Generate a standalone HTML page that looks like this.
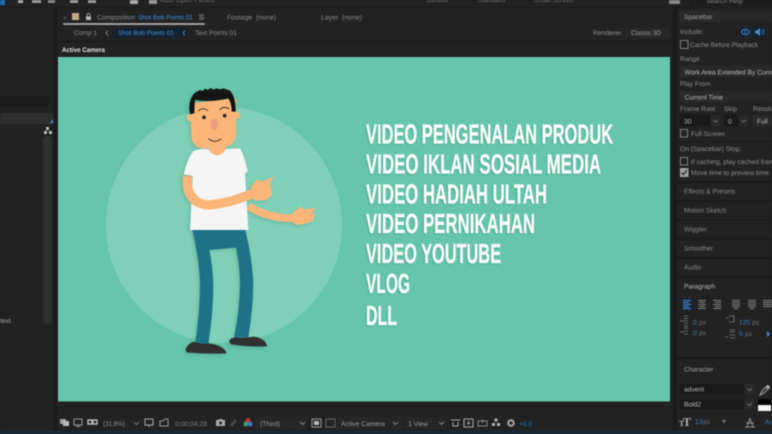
<!DOCTYPE html>
<html><head><meta charset="utf-8"><style>
html,body{margin:0;padding:0;width:772px;height:434px;overflow:hidden;background:#1b1b1b}
svg{display:block;filter:blur(.45px)}
text{font-family:"Liberation Sans",sans-serif;font-size:6.700px;fill:#8e8e8e;text-rendering:geometricPrecision}
.b{fill:#3f8fe0}.w{fill:#c4c4c4}
.h{font-family:"Liberation Sans Narrow","Liberation Sans",sans-serif;font-weight:700;font-size:27.5px;fill:#fbfefd;stroke:#fbfefd;stroke-width:.35px}
</style></head><body>
<svg width="772" height="434" viewBox="0 0 772 434" xmlns="http://www.w3.org/2000/svg">
<rect width="772" height="434" fill="#1b1b1b"/>
<!-- top bar -->
<rect width="772" height="7" fill="#222"/>
<rect x="0" y="0" width="5" height="5" fill="#1f6fc0"/>
<rect x="18" y="0" width="5" height="3" fill="#aaa"/><rect x="32" y="0" width="9" height="3" fill="#999"/><rect x="48" y="0" width="7" height="3" fill="#888"/><rect x="70" y="0" width="8" height="3" fill="#999"/><rect x="88" y="0" width="8" height="3" fill="#999"/>
<rect x="130" y="0" width="8" height="4" fill="#aaa"/><rect x="149" y="0" width="8" height="4" fill="#999"/>
<text x="160" y="2" style="fill:#777">Auto-Open Panels</text><text x="427" y="2" style="fill:#777">Default</text><text x="478" y="2" style="fill:#777">Standard</text><text x="534" y="2" style="fill:#777">Small Screen</text>
<rect x="669" y="0" width="11" height="4" fill="#888"/>
<rect x="690" y="0" width="82" height="6" fill="#1c1c1c"/><text x="706" y="3" style="fill:#888">Search Help</text>
<!-- panels -->
<rect x="0" y="8" width="54" height="423" fill="#222"/>
<rect x="57" y="8" width="616" height="423" fill="#222"/>
<rect x="677" y="8" width="95" height="423" fill="#222"/>
<rect x="0" y="431" width="772" height="3" fill="#1a2b3a"/>
<!-- left panel -->
<rect x="0" y="96" width="49" height="11" fill="#1b1b1b"/>
<rect x="0" y="113" width="53" height="11" fill="#2e2e2e"/>
<path d="M53 119v4h-3z" fill="#3f8fe0"/>
<g fill="#bbb"><rect x="46" y="127" width="3" height="3"/><rect x="44" y="131" width="3" height="3"/><rect x="49" y="131" width="3" height="3"/></g>
<rect x="43" y="136" width="9" height="188" rx="4" fill="#2f2f2f"/>
<text x="0" y="323" style="fill:#aaa">text</text>
<!-- comp tab row -->
<text x="63" y="20" style="fill:#666">×</text>
<rect x="72" y="13" width="7" height="7" fill="#c2ab85"/>
<path d="M86 16.500h5v3.500h-5z" fill="#bbb"/><path d="M87 16.500v-1.500a1.500 1.500 0 0 1 3 0v1.500" fill="none" stroke="#bbb" stroke-width=".8"/>
<text x="97" y="19.500" textLength="38" lengthAdjust="spacingAndGlyphs">Composition</text><text x="138" y="19.500" class="b" textLength="55" lengthAdjust="spacingAndGlyphs">Shot Bob Points 01</text>
<path d="M199 15h5M199 17h5M199 19h5" stroke="#999" stroke-width=".8"/>
<rect x="63" y="23" width="142" height="2" rx="1" fill="#a0a0a0"/>
<text x="227" y="19.500" textLength="49" lengthAdjust="spacing">Footage&#160; (none)</text><text x="321" y="19.500" textLength="41" lengthAdjust="spacing">Layer&#160; (none)</text>
<!-- breadcrumb -->
<text x="74" y="35" textLength="23" lengthAdjust="spacingAndGlyphs">Comp 1</text>
<path d="M108 30.500l-2 2.500 2 2.500" fill="none" stroke="#999" stroke-width=".8"/>
<rect x="112" y="28" width="75" height="10" rx="1" fill="#16202c"/>
<text x="118" y="35" class="b" textLength="56" lengthAdjust="spacingAndGlyphs">Shot Bob Points 01</text>
<path d="M185 30.500l-2 2.500 2 2.500" fill="none" stroke="#5a9fe0" stroke-width=".8"/>
<text x="195" y="35" textLength="42" lengthAdjust="spacingAndGlyphs">Text Points 01</text>
<text x="593" y="35" textLength="30" lengthAdjust="spacingAndGlyphs">Renderer:</text>
<rect x="625" y="28" width="45" height="10" rx="1" fill="#272727"/><text x="631" y="35" style="fill:#a0a0a0" textLength="30" lengthAdjust="spacingAndGlyphs">Classic 3D</text>
<rect x="57" y="41" width="616" height="1" fill="#181818"/>
<text x="62" y="52" style="fill:#e0e0e0;font-weight:700" textLength="43" lengthAdjust="spacingAndGlyphs">Active Camera</text>
<!-- viewer -->
<rect x="58" y="57" width="612" height="344.500" fill="#66c6a9"/>
<circle cx="224" cy="225" r="118" fill="#80d0b8"/>
<!-- character, coords from 3x crop -->
<g style="filter:drop-shadow(-2px 2px 1.500px rgba(30,90,70,.16))">
<g transform="translate(150 225) scale(.33333)">
<path d="M127 15Q145 90 150 170Q150 260 135 357L175 357Q190 260 190 180Q188 120 178 75L258 68Q270 130 270 180Q268 260 252 337L295 337Q310 250 310 170Q305 90 285 10Z" fill="#1f7389"/>
<path d="M107 373Q112 357 130 350Q150 358 175 355Q222 360 230 385Q170 388 110 382Z" fill="#303030"/>
<path d="M237 350Q240 338 258 337Q285 340 310 335Q345 338 352 364Q290 366 243 358Z" fill="#303030"/>
</g>
<g transform="translate(150 80) scale(.33333)">
<path d="M296 378Q350 415 435 415" fill="none" stroke="#fbb578" stroke-width="23"/>
<path d="M425 402L452 380L462 388L497 384L486 398L494 402L488 425L445 435Q425 430 425 415Z" fill="#fbb578"/>
<path d="M130 213Q150 205 180 208Q200 235 225 207L270 205Q282 225 293 275L285 280L295 450L120 450L128 288L101 283Q110 240 130 213Z" fill="#f5f5f5"/>
<path d="M113 288Q105 365 170 375Q240 372 320 335" fill="none" stroke="#fbb578" stroke-width="28"/>
<path d="M303 320L322 298L335 305L372 289L360 308L366 345L350 360L312 362Z" fill="#fbb578"/>
<path d="M178 190L226 190L226 212Q200 240 178 212Z" fill="#fbb578"/>
<circle cx="121" cy="113" r="11" fill="#fbb578"/><circle cx="261" cy="106" r="10" fill="#fbb578"/>
<path d="M122 70L258 55V165Q255 200 215 203L165 206Q125 205 124 165Z" fill="#fbb578"/>
<path d="M120 103Q112 60 135 38L150 30L158 33L165 25L172 30L183 24L190 29L200 25L210 28L220 25L240 32Q258 52 257 95L245 95Q245 70 235 55Q180 68 135 60Q133 80 133 100Z" fill="#151515"/>
<ellipse cx="193" cy="134" rx="11" ry="17" fill="#ec9c7f"/>
<circle cx="162" cy="112" r="5.500" fill="#222"/><circle cx="224" cy="107" r="5.500" fill="#222"/>
<path d="M145 93Q158 80 174 92M208 90Q222 76 238 87" fill="none" stroke="#222" stroke-width="2.500"/>
<path d="M175 176Q195 192 214 176" fill="none" stroke="#222" stroke-width="2.500"/>
</g>
</g>
<!-- headline -->
<g style="filter:drop-shadow(-1px 1px .6px rgba(40,110,90,.3))">
<text class="h" x="366" y="143.500" textLength="247" lengthAdjust="spacingAndGlyphs">VIDEO PENGENALAN PRODUK</text>
<text class="h" x="366" y="173.500" textLength="235" lengthAdjust="spacingAndGlyphs">VIDEO IKLAN SOSIAL MEDIA</text>
<text class="h" x="366" y="203.500" textLength="181" lengthAdjust="spacingAndGlyphs">VIDEO HADIAH ULTAH</text>
<text class="h" x="366" y="233" textLength="169" lengthAdjust="spacingAndGlyphs">VIDEO PERNIKAHAN</text>
<text class="h" x="366" y="263" textLength="135" lengthAdjust="spacingAndGlyphs">VIDEO YOUTUBE</text>
<text class="h" x="366" y="293" textLength="44" lengthAdjust="spacingAndGlyphs">VLOG</text>
<text class="h" x="366" y="325" textLength="31" lengthAdjust="spacingAndGlyphs">DLL</text>
</g>
<!-- viewer footer -->
<rect x="57" y="415" width="616" height="1" fill="#1e1e1e"/>
<g fill="#a0a0a0">
<rect x="60" y="419" width="6" height="5"/><rect x="63" y="421" width="6" height="5" fill="#bbb"/>
<path d="M74 419h8v6h-8zM76 426.500h4" fill="none" stroke="#999"/>
<path d="M88 420h4v4h-4zM93 420h4v4h-4z" fill="none" stroke="#bbb" stroke-width="1.400"/>
</g>
<text x="103" y="426" textLength="22" lengthAdjust="spacingAndGlyphs">(31.8%)</text>
<path d="M134 422l2.500 2.500 2.500-2.500" fill="none" stroke="#999" stroke-width=".8"/>
<path d="M145 419h8v6h-8zM149 425v2" fill="none" stroke="#aaa"/>
<path d="M160 426v-5h3l2-2h3v7z" fill="none" stroke="#999"/>
<text x="175" y="426" style="fill:#7e7e7e" textLength="32" lengthAdjust="spacingAndGlyphs">0;00;04;28</text>
<path d="M216 420h2l1-1h3l1 1h2v6h-9z" fill="#aaa"/><circle cx="220.500" cy="423" r="1.600" fill="#333"/>
<path d="M231 426l5-6" stroke="#444" stroke-width="3"/>
<circle cx="248" cy="420.500" r="2.400" fill="#c33"/><circle cx="245.800" cy="424" r="2.400" fill="#3a6"/><circle cx="250.200" cy="424" r="2.400" fill="#47c"/>
<rect x="255" y="417" width="52" height="12" fill="#262626"/>
<text x="260" y="426" style="fill:#9a9a9a" textLength="20" lengthAdjust="spacingAndGlyphs">(Third)</text>
<path d="M300 422l2.500 2.500 2.500-2.500" fill="none" stroke="#999" stroke-width=".8"/>
<rect x="312" y="419" width="9" height="8" fill="none" stroke="#999"/><rect x="314" y="421" width="5" height="4" fill="#bbb"/>
<rect x="326" y="419" width="9" height="8" fill="none" stroke="#666"/>
<rect x="337" y="417" width="66" height="12" fill="#262626"/><rect x="405" y="417" width="42" height="12" fill="#262626"/>
<text x="341" y="426" style="fill:#9a9a9a" textLength="44" lengthAdjust="spacingAndGlyphs">Active Camera</text><text x="408" y="426" style="fill:#9a9a9a" textLength="20" lengthAdjust="spacingAndGlyphs">1 View</text>
<path d="M393 422l2.500 2.500 2.500-2.500M439 422l2.500 2.500 2.500-2.500" fill="none" stroke="#999" stroke-width=".8"/>
<path d="M451 420h9M453 422v4h5v-4" fill="none" stroke="#aaa"/>
<rect x="464" y="419" width="9" height="8" fill="none" stroke="#aaa"/><path d="M468.500 421v4M466.500 423h4" stroke="#aaa" stroke-width=".8"/>
<path d="M478 421h9v5h-9zM482.500 419v4" fill="none" stroke="#888"/>
<g fill="#b0b0b0"><rect x="494.500" y="418.500" width="3" height="3"/><rect x="492" y="423" width="3" height="3"/><rect x="497" y="423" width="3" height="3"/></g>
<circle cx="511" cy="423" r="2.800" fill="none" stroke="#aaa" stroke-width="2"/>
<text x="519" y="426" style="fill:#2f6db3" textLength="13" lengthAdjust="spacingAndGlyphs">+0.0</text>
<!-- right panel -->
<rect x="679" y="11" width="93" height="11" fill="#292929"/><text x="684" y="19" style="fill:#a0a0a0">Spacebar</text>
<text x="680" y="34">Include:</text>
<rect x="740" y="27" width="11" height="10" fill="#16212d"/><rect x="753" y="27" width="13" height="10" fill="#16212d"/>
<ellipse cx="745.500" cy="32" rx="3.800" ry="2.600" fill="none" stroke="#3f8fe0"/><circle cx="745.500" cy="32" r="1" fill="#3f8fe0"/>
<path d="M755 30.500h2l3-2.500v8l-3-2.500h-2z" fill="#3f8fe0"/><path d="M761.500 30a3 3 0 0 1 0 4M763 29a5 5 0 0 1 0 6" fill="none" stroke="#3f8fe0" stroke-width=".7"/>
<rect x="680.500" y="40.500" width="7.500" height="8" fill="none" stroke="#808080"/>
<text x="690" y="47" textLength="68" lengthAdjust="spacingAndGlyphs">Cache Before Playback</text>
<text x="680" y="61">Range</text>
<rect x="679" y="66" width="93" height="11" fill="#292929"/><text x="684.500" y="74.500" style="fill:#b8b8b8">Work Area Extended By Current</text>
<text x="680" y="86">Play From</text>
<rect x="679" y="91" width="93" height="11" fill="#292929"/><text x="684.500" y="99.500" style="fill:#b8b8b8">Current Time</text>
<text x="680" y="111">Frame Rate</text><text x="724" y="111">Skip</text><text x="753" y="111">Resolu</text>
<rect x="680" y="115" width="30" height="11" fill="#191919"/><rect x="711" y="115" width="9" height="11" fill="#292929"/>
<rect x="724" y="115" width="14" height="11" fill="#191919"/><rect x="739" y="115" width="9" height="11" fill="#292929"/>
<rect x="753" y="115" width="19" height="11" fill="#292929"/>
<text x="684" y="123.500" style="fill:#b8b8b8">30</text><text x="728" y="123.500" style="fill:#b8b8b8">0</text><text x="757" y="123.500" style="fill:#b8b8b8">Full</text>
<path d="M713 120l2.500 2 2.500-2M741 120l2.500 2 2.500-2" fill="none" stroke="#888" stroke-width=".7"/>
<rect x="680.500" y="129.500" width="7" height="7.500" fill="none" stroke="#808080"/>
<text x="691" y="136">Full Screen</text>
<rect x="677" y="141" width="95" height="1" fill="#1b1b1b"/>
<text x="680" y="151">On (Spacebar) Stop:</text>
<rect x="680.500" y="157.500" width="7" height="7.500" fill="none" stroke="#808080"/>
<text x="691" y="164">If caching, play cached frames</text>
<rect x="680" y="168" width="8.500" height="9" fill="#a0a0a0"/><path d="M681.500 172.500l2 2 3.500-4.500" fill="none" stroke="#222" stroke-width="1.100"/>
<text x="691" y="175">Move time to preview time</text>
<g fill="#1b1b1b"><rect x="677" y="181" width="95" height="2"/><rect x="677" y="200" width="95" height="2"/><rect x="677" y="219" width="95" height="2"/><rect x="677" y="238" width="95" height="2"/><rect x="677" y="257" width="95" height="2"/><rect x="677" y="276" width="95" height="2"/><rect x="677" y="357" width="95" height="2"/></g>
<g><text x="684" y="193.500" style="fill:#888">Effects &amp; Presets</text><text x="684" y="212.500" style="fill:#888">Motion Sketch</text><text x="684" y="231.500" style="fill:#888">Wiggler</text><text x="684" y="250.500" style="fill:#888">Smoother</text><text x="684" y="269.500" style="fill:#888">Audio</text></g>
<text x="684" y="288.500" style="fill:#b8b8b8">Paragraph</text>
<rect x="681" y="298" width="12" height="13" fill="#1a2430"/>
<path d="M683 300.500h8M683 302.500h6M683 304.500h8M683 306.500h6M683 308.500h8" stroke="#3f8fe0"/>
<path d="M698 300.500h8M699 302.500h6M698 304.500h8M699 306.500h6M698 308.500h8M713 300.500h8M715 302.500h6M713 304.500h8M715 306.500h6M713 308.500h8M732 300.500h8M732 302.500h8M732 304.500h8M732 306.500h8M734 308.500h4M748 300.500h8M748 302.500h8M748 304.500h8M748 306.500h8M750 308.500h4M763 300.500h9M763 302.500h9M763 304.500h9M763 306.500h9" stroke="#808080"/>
<rect x="677" y="314" width="95" height="1" fill="#1d1d1d"/>
<path d="M680 321h4M684 316h4M684 318.500h4M684 321h4M684 323.500h4M684 326h4M680 332h4M684 328h4M684 331h4M684 334h4M726 318h3M729 316h5v6h-5M725 337h3M730 332h5M730 335h5M730 338h5M730 330h5" stroke="#808080" fill="none" stroke-width=".8"/>
<text x="693" y="324.500" style="fill:#3f7fc8">0</text><text x="699" y="324.500" style="fill:#6e6e6e">px</text>
<text x="739" y="324.500" style="fill:#3f7fc8">125</text><text x="752" y="324.500" style="fill:#6e6e6e">px</text>
<text x="693" y="335" style="fill:#3f7fc8">0</text><text x="699" y="335" style="fill:#6e6e6e">px</text>
<text x="739" y="336" style="fill:#3f7fc8">0</text><text x="745" y="336" style="fill:#6e6e6e">px</text>
<path d="M767 331l3 3-3 3z" fill="#3f8fe0"/>
<text x="684" y="371.500" style="fill:#a0a0a0">Character</text>
<rect x="680" y="384" width="64" height="10" fill="#191919"/><rect x="745" y="384" width="10" height="10" fill="#292929"/>
<rect x="680" y="399" width="64" height="10" fill="#191919"/><rect x="745" y="399" width="10" height="10" fill="#292929"/>
<text x="684" y="391.500" style="fill:#b8b8b8">advent</text><text x="684" y="406.500" style="fill:#b8b8b8">Bold2</text>
<path d="M747 388.500l2.500 2 2.500-2M747 403.500l2.500 2 2.500-2" fill="none" stroke="#888" stroke-width=".7"/>
<path d="M760 395l2-4 4-4 2 2-4 4z" fill="none" stroke="#a8a8a8"/><path d="M766 386l2-1 2 2-1 2z" fill="#bbb"/>
<rect x="758" y="399" width="13" height="6" fill="#050505"/><rect x="758" y="405" width="13" height="6" fill="#f4f4f4"/>
<text x="679" y="426" style="font-family:'Liberation Serif',serif;font-size:8px;font-weight:700;fill:#b0b0b0">T</text><text x="683" y="426" style="font-family:'Liberation Serif',serif;font-size:12px;font-weight:700;fill:#b0b0b0">T</text>
<text x="695" y="424" style="fill:#3f7fc8">13</text><text x="703" y="424" style="fill:#6e6e6e">px</text>
<path d="M722 420l2 3 2-3z" fill="#888"/>
<path d="M750 418l-3 9M750 418l3 9M745 427h10M746 423h8" fill="none" stroke="#909090"/>
<text x="765" y="424" style="fill:#3f7fc8">Auto</text>
</svg>
</body></html>
